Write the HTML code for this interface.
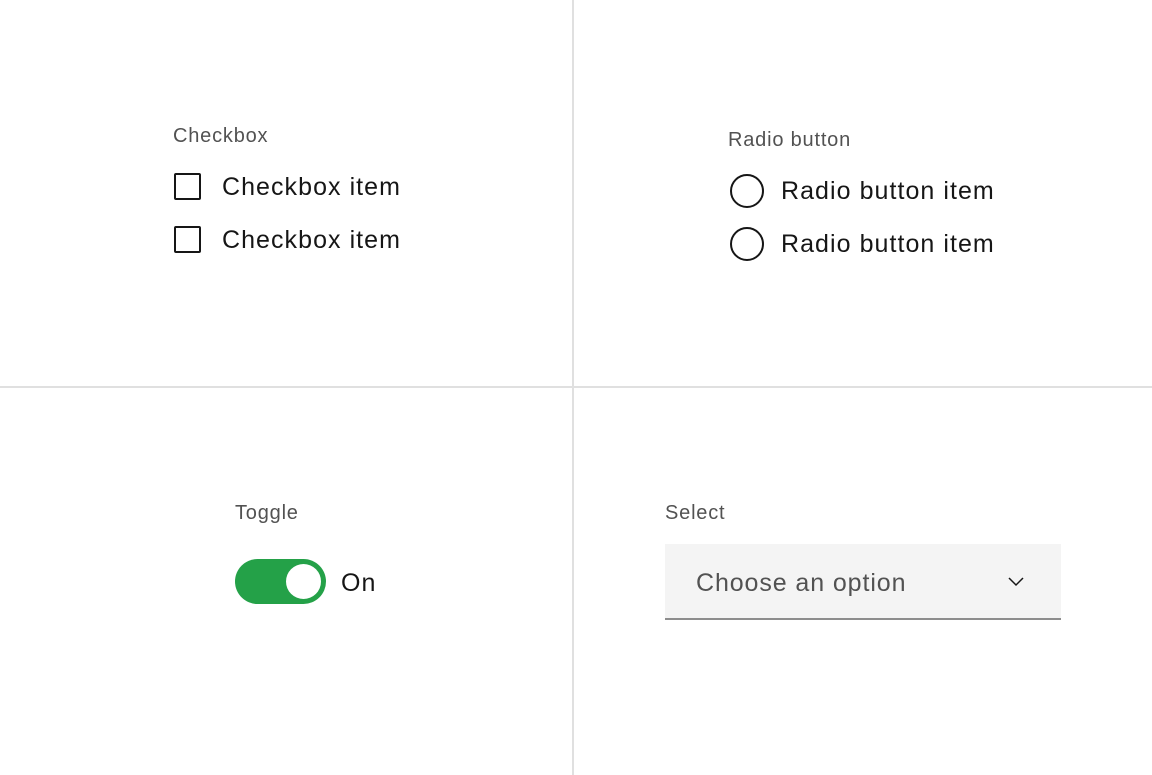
<!DOCTYPE html>
<html><head><meta charset="utf-8"><style>
body{margin:0;width:1152px;height:775px;background:#fff;position:relative;overflow:hidden;font-family:"Liberation Sans",sans-serif;color:#161616}
.a{position:absolute;white-space:nowrap}
.lbl{font-size:20px;color:#525252;letter-spacing:0.8px}
.it{font-size:25px;letter-spacing:1.05px}
.cb{position:absolute;width:23px;height:23px;border:2px solid #161616;border-radius:2px}
.rb{position:absolute;width:30px;height:30px;border:2px solid #161616;border-radius:50%}
</style></head><body>
<div class="a" style="left:572px;top:0;width:2px;height:775px;background:#e0e0e0"></div>
<div class="a" style="left:0;top:386px;width:1152px;height:2px;background:#e0e0e0"></div>

<div class="a lbl" style="left:173px;top:125px">Checkbox</div>
<div class="cb" style="left:174px;top:173px"></div>
<div class="a it" style="left:222px;top:173px">Checkbox item</div>
<div class="cb" style="left:174px;top:226px"></div>
<div class="a it" style="left:222px;top:226px">Checkbox item</div>

<div class="a lbl" style="left:728px;top:129px">Radio button</div>
<div class="rb" style="left:730px;top:174px"></div>
<div class="a it" style="left:781px;top:177px">Radio button item</div>
<div class="rb" style="left:730px;top:227px"></div>
<div class="a it" style="left:781px;top:230px">Radio button item</div>

<div class="a lbl" style="left:235px;top:502px">Toggle</div>
<div class="a" style="left:235px;top:559px;width:91px;height:45px;border-radius:23px;background:#24a148"></div>
<div class="a" style="left:286px;top:564px;width:35px;height:35px;border-radius:50%;background:#fff"></div>
<div class="a it" style="left:341px;top:569px">On</div>

<div class="a lbl" style="left:665px;top:502px">Select</div>
<div class="a" style="left:665px;top:544px;width:396px;height:74px;background:#f4f4f4;border-bottom:2px solid #8d8d8d"></div>
<div class="a it" style="left:696px;top:569px;color:#525252;letter-spacing:0.9px">Choose an option</div>
<svg class="a" style="left:1006px;top:575px" width="20" height="14" viewBox="0 0 20 14"><path d="M3 3 L10 10 L17 3" fill="none" stroke="#161616" stroke-width="1.5"/></svg>
</body></html>
